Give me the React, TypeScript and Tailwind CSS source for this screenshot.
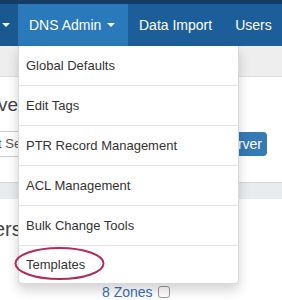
import React from "react";

const Caret = () => (
  <span className="inline-block w-0 h-0 border-l-[4px] border-r-[4px] border-t-[4px] border-l-transparent border-r-transparent border-t-white" />
);

const items = [
  "Global Defaults",
  "Edit Tags",
  "PTR Record Management",
  "ACL Management",
  "Bulk Change Tools",
  "Templates",
];

export default function App() {
  return (
    <div className="relative w-[282px] h-[300px] overflow-hidden bg-white font-['Liberation_Sans',Arial,sans-serif] text-[#333]">
      <div className="h-[4px] bg-[#143d66]" />
      <nav className="h-[42px] bg-[#1c5e9a] flex items-center text-white text-[14px]">
        <div className="w-[18px] h-full bg-[#1a5892] flex items-center pl-[2px]">
          <Caret />
        </div>
        <div className="w-[110px] h-full bg-[#2a79bb] flex items-center pl-[11px] gap-[6px]">
          <span>DNS Admin</span>
          <Caret />
        </div>
        <div className="pl-[11px]">Data Import</div>
        <div className="pl-[23px]">Users</div>
      </nav>
      <div className="h-[31px] bg-[#eeeeee] border-b border-[#dddddd]" />
      <div className="flex flex-col">
        <div className="mt-[16px] h-[24px] leading-[24px] text-[19px] text-[#444] -ml-[2px]">ve</div>
        <div className="mt-[14px] h-[26px] flex items-center justify-between">
          <div className="h-[26px] flex items-center border-y border-[#cccccc] text-[13px] text-[#555] -ml-[2px] pr-[20px]">t Se</div>
          <div className="mr-[15px] h-[24px] w-[40px] flex items-center justify-end pr-[5px] rounded-[4px] bg-[#337ab7] text-white text-[14px]">rver</div>
        </div>
        <div className="mt-[25px] h-[17px] bg-[#e8ecef] border-t border-[#d4d8db]" />
        <div className="mt-[17px] h-[26px] leading-[26px] text-[20px] text-[#444] -ml-[6px]">ers</div>
        <div className="mt-[42px] flex items-center gap-[5px] pl-[102px]">
          <span className="text-[14px] text-[#3a6fb2] leading-[16px]">8 Zones</span>
          <span className="w-[12px] h-[12px] rounded-[3px] border border-[#999] bg-white" />
        </div>
      </div>

      <div className="absolute left-[18px] top-[46px] w-[221px] bg-white border border-[rgba(0,0,0,0.15)] border-t-0 rounded-b-[4px] shadow-[0_6px_12px_rgba(0,0,0,0.175)] text-[13px] text-[#333]">
        {items.map((t, i) => (
          <div key={t}>
            {i > 0 && <div className="h-px bg-[#e5e5e5]" />}
            <div className={`${i === 5 ? "h-[37px]" : "h-[39px]"} flex items-center pl-[7px]`}>{t}</div>
          </div>
        ))}
      </div>

      <svg className="absolute left-0 top-0" width="282" height="300" viewBox="0 0 282 300" fill="none">
        <ellipse cx="59.5" cy="263.5" rx="44" ry="15.5" stroke="#b02c57" strokeWidth="2" />
      </svg>
    </div>
  );
}
